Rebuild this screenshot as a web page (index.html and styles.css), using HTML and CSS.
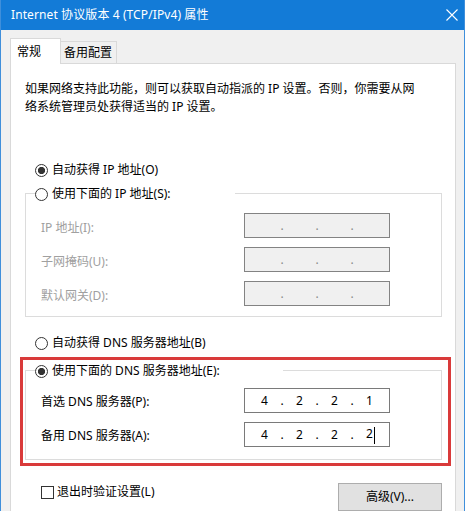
FILE: index.html
```html
<!DOCTYPE html>
<html lang="zh-CN">
<head>
<meta charset="utf-8">
<title>Internet 协议版本 4 (TCP/IPv4) 属性</title>
<link rel="stylesheet" href="styles.css">
</head>
<body>
<div class="window">
  <div class="titlebar">
    <span class="title">Internet 协议版本 4 (TCP/IPv4) 属性</span>
    <svg class="close" width="12" height="12" viewBox="0 0 12 12"><path d="M0.5 0.5 L11.5 11.5 M11.5 0.5 L0.5 11.5" stroke="#fff" stroke-width="1.1" fill="none"/></svg>
  </div>
  <div class="client">
    <div class="tabs">
      <div class="tab active">常规</div>
      <div class="tab inactive">备用配置</div>
    </div>
    <div class="panel">
      <p class="intro">如果网络支持此功能，则可以获取自动指派的 IP 设置。否则，你需要从网<br>络系统管理员处获得适当的 IP 设置。</p>

      <div class="radio first"><span class="rb checked"></span>自动获得 IP 地址(O)</div>

      <fieldset class="group g-ip">
        <legend class="lg lg-ip"><span class="rb"></span>使用下面的 IP 地址(S):</legend>
        <div class="row first-row">
          <span class="lbl off">IP 地址(I):</span>
          <div class="ipbox off"><span></span><span class="dot">.</span><span></span><span class="dot">.</span><span></span><span class="dot">.</span><span></span></div>
        </div>
        <div class="row">
          <span class="lbl off">子网掩码(U):</span>
          <div class="ipbox off"><span></span><span class="dot">.</span><span></span><span class="dot">.</span><span></span><span class="dot">.</span><span></span></div>
        </div>
        <div class="row">
          <span class="lbl off">默认网关(D):</span>
          <div class="ipbox off"><span></span><span class="dot">.</span><span></span><span class="dot">.</span><span></span><span class="dot">.</span><span></span></div>
        </div>
      </fieldset>

      <div class="radio dns-auto"><span class="rb"></span>自动获得 DNS 服务器地址(B)</div>

      <div class="highlight">
        <fieldset class="group g-dns">
          <legend class="lg lg-dns"><span class="rb checked"></span>使用下面的 DNS 服务器地址(E):</legend>
          <div class="row first-row dns-first">
            <span class="lbl">首选 DNS 服务器(P):</span>
            <div class="ipbox"><span>4</span><span class="dot">.</span><span>2</span><span class="dot">.</span><span>2</span><span class="dot">.</span><span>1</span></div>
          </div>
          <div class="row">
            <span class="lbl">备用 DNS 服务器(A):</span>
            <div class="ipbox"><span>4</span><span class="dot">.</span><span>2</span><span class="dot">.</span><span>2</span><span class="dot">.</span><span>2<i class="caret"></i></span></div>
          </div>
        </fieldset>
      </div>

      <div class="bottom">
        <div class="check"><span class="cb"></span>退出时验证设置(L)</div>
        <button class="btn">高级(V)...</button>
      </div>
    </div>
  </div>
</div>
</body>
</html>
```

FILE: styles.css
```css
* { box-sizing: border-box; }
html, body { margin: 0; padding: 0; }
body {
  background: #ffffff;
  width: 467px;
  height: 511px;
  overflow: hidden;
  font-family: "Noto Sans", "Noto Sans CJK SC", sans-serif;
  font-size: 12px;
  line-height: 18px;
  color: #000;
}
.window {
  width: 465px;
  border-left: 1px solid #3f8fdb;
  border-right: 1px solid #3f8fdb;
  background: #f0f0f0;
}
.titlebar {
  height: 30px;
  background: #137bd7;
  display: flex;
  align-items: center;
  justify-content: space-between;
  padding: 0 5px 0 10px;
  color: #fff;
}
.title { font-size: 12px; line-height: 18px; letter-spacing: 0.1px; }
.close { display: block; margin-right: 1px; }

.client {
  padding: 8px 8px 0 9px;
}
.tabs {
  display: flex;
  align-items: flex-end;
  height: 25px;
}
.tab {
  font-size: 12px;
  line-height: 18px;
}
.active {
  position: relative;
  z-index: 1;
  width: 51px;
  height: 26px;
  margin-bottom: -1px;
  background: #fff;
  border: 1px solid #d9d9d9;
  border-bottom: none;
  padding: 4px 0 0 6px;
}
.inactive {
  width: 56px;
  height: 22px;
  background: #f0f0f0;
  border: 1px solid #d9d9d9;
  border-left: none;
  border-bottom: none;
  padding: 2px 0 0 3px;
}
.panel {
  background: #fff;
  border: 1px solid #d9d9d9;
  height: 470px;
  padding: 16px 13px 10px 14px;
}
.intro {
  margin: 0;
  line-height: 18px;
}
.radio {
  display: flex;
  align-items: center;
  height: 18px;
  padding-left: 10px;
}
.radio.first { margin-top: 45px; }
.rb {
  display: inline-block;
  width: 13px;
  height: 13px;
  border: 1px solid #333;
  border-radius: 50%;
  background: #fff;
  margin-right: 4px;
  flex: none;
}
.rb.checked {
  background: radial-gradient(circle at center, #333 0, #333 3.3px, #fff 3.9px);
}
.group {
  margin: 0;
  border: 1px solid #dcdcdc;
  padding: 0 0 0 9px;
  min-width: 0;
}
.g-ip { margin-top: 4px; padding-bottom: 10px; }
.lg {
  padding: 2px 0 0 0;
  display: flex;
  align-items: center;
  height: 20px;
}
.lg-ip { width: 200px; }
.lg-dns { width: 248px; }
.row {
  display: flex;
  align-items: center;
  margin-left: 6px;
  margin-top: 9px;
}
.row.first-row { margin-top: 10px; }
.row.dns-first { margin-top: 8px; }
.lbl {
  width: 203px;
  padding-top: 2px;
}
.lbl.off { color: #a0a0a0; padding-top: 4px; }
.ipbox {
  width: 146px;
  height: 25px;
  border: 1px solid #7a7a7a;
  background: #fff;
  display: grid;
  grid-template-columns: 29px 6px 29px 6px 29px 6px 29px;
  align-items: center;
  padding-left: 5px;
  text-align: center;
  line-height: 18px;
}
.ipbox.off { background: #f0f0f0; border-color: #838383; color: #8a8a8a; }
.dot { line-height: 18px; }
.caret {
  display: inline-block;
  width: 1px;
  height: 17px;
  background: #000;
  vertical-align: middle;
  margin-left: 1px;
  margin-right: -2px;
}
.radio.dns-auto { margin-top: 17px; }
.highlight {
  margin: 5px -9px 0 -5px;
  border: 3px solid #d93a3a;
  padding: 0 6px 3px 2px;
}
.g-dns { padding-bottom: 12px; }
.bottom {
  display: flex;
  justify-content: space-between;
  align-items: flex-start;
}
.check {
  display: flex;
  align-items: center;
  height: 18px;
  margin: 17px 0 0 16px;
}
.cb {
  display: inline-block;
  width: 13px;
  height: 13px;
  border: 1px solid #333;
  background: #fff;
  margin-right: 3px;
}
.btn {
  margin-top: 17px;
  width: 104px;
  height: 28px;
  background: #e1e1e1;
  border: 1px solid #adadad;
  font-family: "Noto Sans", "Noto Sans CJK SC", sans-serif;
  font-size: 12px;
  color: #000;
  padding: 0 0 2px 0;
}
```
